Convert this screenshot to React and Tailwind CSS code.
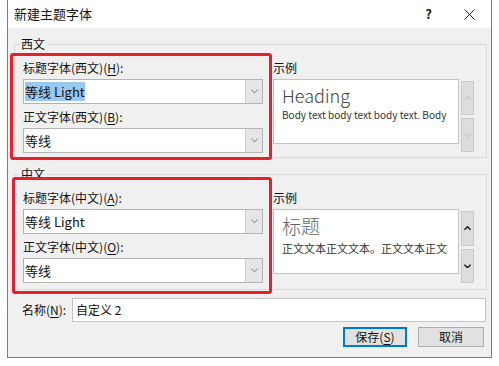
import React from "react";

const font = { fontFamily: '"Noto Sans CJK SC", "Noto Sans", sans-serif' };

const Chevron = ({ dir = "down", color = "#555", w = 8, sw = 1 }) => (
  <svg width={w} height={w / 2 + 1} viewBox="0 0 8 5" fill="none">
    <path
      d={dir === "down" ? "M0.5 0.8 L4 4.2 L7.5 0.8" : "M0.5 4.2 L4 0.8 L7.5 4.2"}
      stroke={color}
      strokeWidth={sw}
    />
  </svg>
);

const Key = ({ k }) => (
  <>
    (<span className="underline underline-offset-2">{k}</span>):
  </>
);

const Combo = ({ children }) => (
  <div className="h-[25px] w-[240px] bg-white border border-[#b4b4b4] flex">
    <div className="flex-1 flex items-center pl-[1px] text-[13px] text-[#111]">{children}</div>
    <div className="w-[17px] bg-[#e6e6e6] border-l border-[#cfcfcf] flex items-center justify-center">
      <Chevron color="#666" w={7} />
    </div>
  </div>
);

const ScrollBtn = ({ dir, active, h }) => (
  <div
    className={`w-[13px] bg-[#dddddd] border border-[#c9c9c9] flex items-center justify-center ${
      h === 35 ? "h-[35px]" : "h-[34px]"
    }`}
  >
    <Chevron dir={dir} color={active ? "#111" : "#b0b0b0"} w={7} sw={active ? 1.6 : 1} />
  </div>
);

const Group = ({ legend, labels, first, preview, active, pb }) => (
  <fieldset className={`border border-[#d9d9d9] pl-[4px] ${pb}`}>
    <legend className="px-[2px] text-[12px] leading-[16px] text-[#111]">{legend}</legend>
    <div className="flex ml-[4px] mt-[8px]">
      <div className="w-[240px] flex flex-col">
        <div className="h-[16px] text-[12px] leading-[16px] text-[#111]">{labels[0]}</div>
        <div className="mt-[3px]">
          <Combo>{first}</Combo>
        </div>
        <div className="mt-[5px] h-[16px] text-[12px] leading-[16px] text-[#111]">{labels[1]}</div>
        <div className="mt-[3px]">
          <Combo>等线</Combo>
        </div>
      </div>
      <div className="ml-[10px] flex flex-col">
        <div className="h-[16px] text-[12px] leading-[16px] text-[#111]">示例</div>
        <div className="flex mt-[3px]">
          <div className="w-[186px] h-[65px] bg-white border border-[#c3c3c3] px-[8px] overflow-hidden whitespace-nowrap">
            {preview}
          </div>
          <div className="ml-[2px] mt-[2px] flex flex-col gap-[3px]">
            <ScrollBtn dir="up" active={active} h={active ? 35 : 34} />
            <ScrollBtn dir="down" active={active} h={34} />
          </div>
        </div>
      </div>
    </div>
  </fieldset>
);

export default function App() {
  return (
    <div className="relative w-[499px] h-[366px] bg-white overflow-hidden" style={font}>
      <div className="ml-[7px] w-[485px] h-[358px] flex flex-col border-x border-b border-[#7d7d7d]">
        <div className="h-[28px] bg-white flex items-center pl-[6px] pr-[16px]">
          <span className="text-[13px] text-[#111]">新建主题字体</span>
          <div className="flex-1" />
          <span className="text-[13px] font-semibold text-[#222]">?</span>
          <svg className="ml-[32px]" width="11" height="11" viewBox="0 0 11 11">
            <path d="M0.5 0.5 L10.5 10.5 M10.5 0.5 L0.5 10.5" stroke="#222" strokeWidth="1" />
          </svg>
        </div>
        <div className="flex-1 bg-[#f0f0f0] pl-[6px] pr-[4px] flex flex-col">
          <div className="mt-[8px]">
            <Group
              legend="西文"
              labels={[
                <>标题字体(西文)<Key k="H" /></>,
                <>正文字体(西文)<Key k="B" /></>,
              ]}
              first={<span className="bg-[#99c9ef]">等线 Light</span>}
              active={false}
              pb="pb-[4px]"
              preview={
                <>
                  <div className="mt-[2px] text-[18px] leading-[26px] font-light text-[#444]">Heading</div>
                  <div className="text-[10px] leading-[14px] text-[#333]">Body text body text body text. Body</div>
                </>
              }
            />
          </div>
          <div className="mt-[8px]">
            <Group
              legend="中文"
              labels={[
                <>标题字体(中文)<Key k="A" /></>,
                <>正文字体(中文)<Key k="O" /></>,
              ]}
              first="等线 Light"
              active
              pb="pb-[6px]"
              preview={
                <>
                  <div className="mt-[2px] text-[19px] leading-[28px] font-light text-[#666]">标题</div>
                  <div className="text-[11px] leading-[16px] text-[#333]">正文文本正文文本。正文文本正文</div>
                </>
              }
            />
          </div>
          <div className="mt-[8px] h-[24px] flex items-center">
            <span className="ml-[8px] w-[50px] text-[12px] text-[#111]">
              名称<Key k="N" />
            </span>
            <div className="flex-1 mr-[1px] h-[24px] bg-white border border-[#c4c4c4] flex items-center px-[3px] text-[12px] text-[#111]">
              自定义 2
            </div>
          </div>
          <div className="mt-[5px] h-[20px] flex justify-end pr-[3px]">
            <div className="w-[64px] h-[20px] bg-[#e1e1e1] border-2 border-[#0078d7] flex items-center justify-center text-[12px] text-[#111]">
              保存(<span className="underline underline-offset-2">S</span>)
            </div>
            <div className="ml-[11px] w-[66px] h-[20px] bg-[#e1e1e1] border border-[#adadad] flex items-center justify-center text-[12px] text-[#111]">
              取消
            </div>
          </div>
        </div>
      </div>
      <div className="absolute left-[10px] top-[53px] w-[262px] h-[107px] border-[3px] border-[#e4222c] rounded-[3px]" />
      <div className="absolute left-[12px] top-[177px] w-[260px] h-[117px] border-[3px] border-[#e4222c] rounded-[3px]" />
    </div>
  );
}
